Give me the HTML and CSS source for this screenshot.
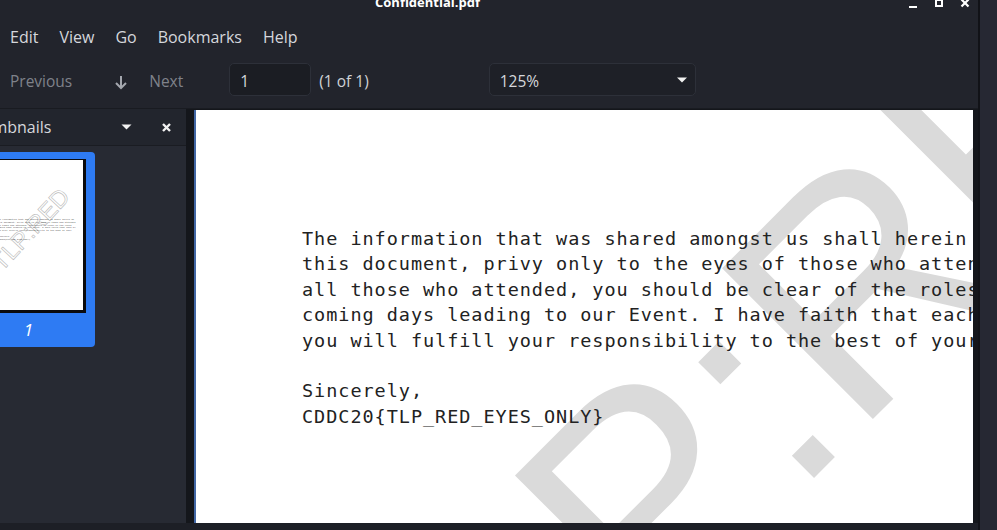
FILE: index.html
```html
<!DOCTYPE html>
<html>
<head>
<meta charset="utf-8">
<title>Confidential.pdf</title>
<link rel="stylesheet" href="styles.css">
</head>
<body>
<div class="window">
  <header class="titlebar">
    <span class="title">Confidential.pdf</span>
    <div class="wctl">
      <svg width="10" height="10" viewBox="0 0 10 10"><rect x="1" y="8" width="8" height="2" fill="#fff"/></svg>
      <svg width="10" height="10" viewBox="0 0 10 10"><rect x="2" y="2" width="6" height="6" fill="none" stroke="#fff" stroke-width="2"/></svg>
      <svg width="10" height="10" viewBox="0 0 10 10"><path d="M1.5 1.5L8.5 8.5M8.5 1.5L1.5 8.5" stroke="#fff" stroke-width="2.2"/></svg>
    </div>
  </header>
  <nav class="menubar">
    <span>Edit</span><span>View</span><span>Go</span><span>Bookmarks</span><span>Help</span>
  </nav>
  <div class="toolbar">
    <span class="tb-btn dis">Previous</span>
    <span class="tb-btn dis next">
      <svg width="14" height="16" viewBox="0 0 14 16"><path d="M7 2V14M2 9L7 14L12 9" fill="none" stroke="#a4a7ae" stroke-width="2"/></svg>
      <span>Next</span>
    </span>
    <div class="entry"><span>1</span></div>
    <span class="pages">(1 of 1)</span>
    <div class="combo"><span>125%</span>
      <svg width="12" height="6" viewBox="0 0 12 6"><path d="M1 0.5H11L6 5.5Z" fill="#f2f2f2"/></svg>
    </div>
  </div>
  <div class="main">
    <aside class="sidebar">
      <div class="side-head">
        <span class="side-title">Thumbnails</span>
        <svg class="side-tri" width="11" height="6" viewBox="0 0 11 6"><path d="M0.5 0.5H10.5L5.5 5.5Z" fill="#f2f2f2"/></svg>
        <svg class="side-x" width="11" height="11" viewBox="0 0 11 11"><path d="M2 2L9 9M9 2L2 9" stroke="#f2f2f2" stroke-width="2.4"/></svg>
      </div>
      <div class="thumbs">
        <div class="thumb-item">
          <div class="thumb-page">
            <svg class="thumb-wm" width="113" height="150" viewBox="0 0 113 150"><text x="0" y="0" transform="translate(30 112) rotate(-47)" font-size="24">TLP:RED</text></svg>
            <div class="mini">
<pre class="doc-text">The information that was shared amongst us shall herein be
this document, privy only to the eyes of those who attended
all those who attended, you should be clear of the roles
coming days leading to our Event. I have faith that each of
you will fulfill your responsibility to the best of your

Sincerely,
CDDC20{TLP_RED_EYES_ONLY}</pre>
            </div>
          </div>
          <span class="thumb-num">1</span>
        </div>
      </div>
    </aside>
    <section class="viewport">
      <div class="page">
        <svg class="wm" width="777" height="413" viewBox="0 0 777 413"><text x="0" y="0" transform="translate(196 790) rotate(-45)" font-size="310">TLP:RED</text></svg>
<pre class="doc-text">The information that was shared amongst us shall herein be
this document, privy only to the eyes of those who attended
all those who attended, you should be clear of the roles
coming days leading to our Event. I have faith that each of
you will fulfill your responsibility to the best of your

Sincerely,
CDDC20{TLP_RED_EYES_ONLY}</pre>
      </div>
    </section>
  </div>
  <div class="bottom"></div>
</div>
<div class="beyond"></div>
</body>
</html>
```

FILE: styles.css
```css
* { box-sizing: border-box; }
html, body { margin: 0; padding: 0; }
body {
  width: 997px;
  height: 530px;
  overflow: hidden;
  display: flex;
  background: #262833;
  font-family: "Open Sans", "Noto Sans", sans-serif;
}
.window {
  width: 980px;
  height: 530px;
  display: flex;
  flex-direction: column;
  background: #22242c;
  border-right: 2px solid #111217;
}
.beyond { flex: 1; background: #262833; }

.titlebar {
  height: 20px;
  display: flex;
  align-items: flex-start;
  padding-left: 375px;
  padding-right: 8px;
  overflow: hidden;
}
.title {
  color: #ffffff;
  font-weight: 700;
  font-size: 13px;
  line-height: 13px;
  margin-top: -4px;
}
.wctl {
  margin-left: auto;
  margin-top: -2px;
  display: flex;
  gap: 16px;
}
.wctl svg { display: block; }

.menubar {
  height: 34px;
  display: flex;
  align-items: center;
  gap: 21px;
  padding-left: 10px;
  color: #d5d7dc;
  font-size: 16px;
}

.toolbar {
  height: 55px;
  display: flex;
  align-items: center;
  padding: 0 0 4px 10px;
  font-size: 15.5px;
  border-bottom: 1px solid #191b21;
}
.tb-btn.dis { color: #7f828a; }
.toolbar > span, .entry span, .combo span { padding-top: 3px; }
.next { display: flex; align-items: center; margin-left: 42px; }
.next svg { display: block; margin-right: 21px; margin-top: 3px; }
.entry {
  margin-left: 46px;
  width: 82px;
  height: 33px;
  background: #1b1d23;
  border: 1px solid #2d3039;
  border-radius: 5px;
  color: #d5d7dc;
  display: flex;
  align-items: center;
  padding-left: 10px;
}
.pages { margin-left: 8px; color: #d0d2d7; }
.combo {
  margin-left: 120px;
  width: 207px;
  height: 33px;
  background: #1e2027;
  border: 1px solid #2d3039;
  border-radius: 5px;
  color: #d5d7dc;
  display: flex;
  align-items: center;
  justify-content: space-between;
  padding: 0 7px 0 10px;
}
.combo svg { display: block; margin-top: 2px; }

.main {
  height: 414px;
  display: flex;
}
.sidebar {
  width: 186px;
  background: #272a33;
  display: flex;
  flex-direction: column;
  overflow: hidden;
}
.side-head {
  height: 37px;
  flex: none;
  background: #22252d;
  border-bottom: 1px solid #1a1c22;
  display: flex;
  align-items: center;
  color: #d5d7dc;
  font-size: 16px;
}
.side-title { margin-left: -36px; }
.side-tri { margin-left: auto; display: block; }
.side-x { margin-left: 29px; margin-right: 14px; display: block; }

.thumbs { padding-top: 6px; }
.thumb-item {
  margin-left: -38px;
  width: 133px;
  height: 195px;
  background: #2e7bf3;
  border-radius: 4px;
  padding: 7px 9px 0;
  display: flex;
  flex-direction: column;
  align-items: center;
}
.thumb-page {
  position: relative;
  width: 115px;
  height: 154px;
  flex: none;
  background: #ffffff;
  border: 2px solid #0b0b0d;
  border-width: 1px 3px 3px 1px;
  overflow: hidden;
  padding: 58px 0 0 25px;
}
.thumb-wm {
  position: absolute;
  left: 0;
  top: 0;
  fill: none;
  stroke: #b9b9b9;
  stroke-width: 0.6;
  font-family: "Liberation Sans", sans-serif;
}
.mini {
  position: relative;
  width: 900px;
  transform: scale(0.11);
  transform-origin: 0 0;
}
.mini .doc-text { color: #444; }
.thumb-num {
  color: #ffffff;
  font-style: italic;
  font-size: 17px;
  line-height: 33px;
}

.viewport {
  flex: 1;
  background: #14161b;
  padding: 1px 5px 0 8px;
  overflow: hidden;
}
.page {
  position: relative;
  height: 100%;
  background: #ffffff;
  border-left: 2px solid #4267a5;
  overflow: hidden;
  padding: 116px 0 0 106px;
}
.wm {
  position: absolute;
  left: 0;
  top: 0;
  fill: #dadada;
  font-family: "Liberation Sans", sans-serif;
}
.doc-text {
  position: relative;
  margin: 0;
  font-family: "DejaVu Sans Mono", monospace;
  font-size: 18.5px;
  letter-spacing: 0.96px;
  line-height: 25.4px;
  color: #222222;
  white-space: pre;
}
.bottom {
  flex: 1;
  background: #1d1f26;
}
```
